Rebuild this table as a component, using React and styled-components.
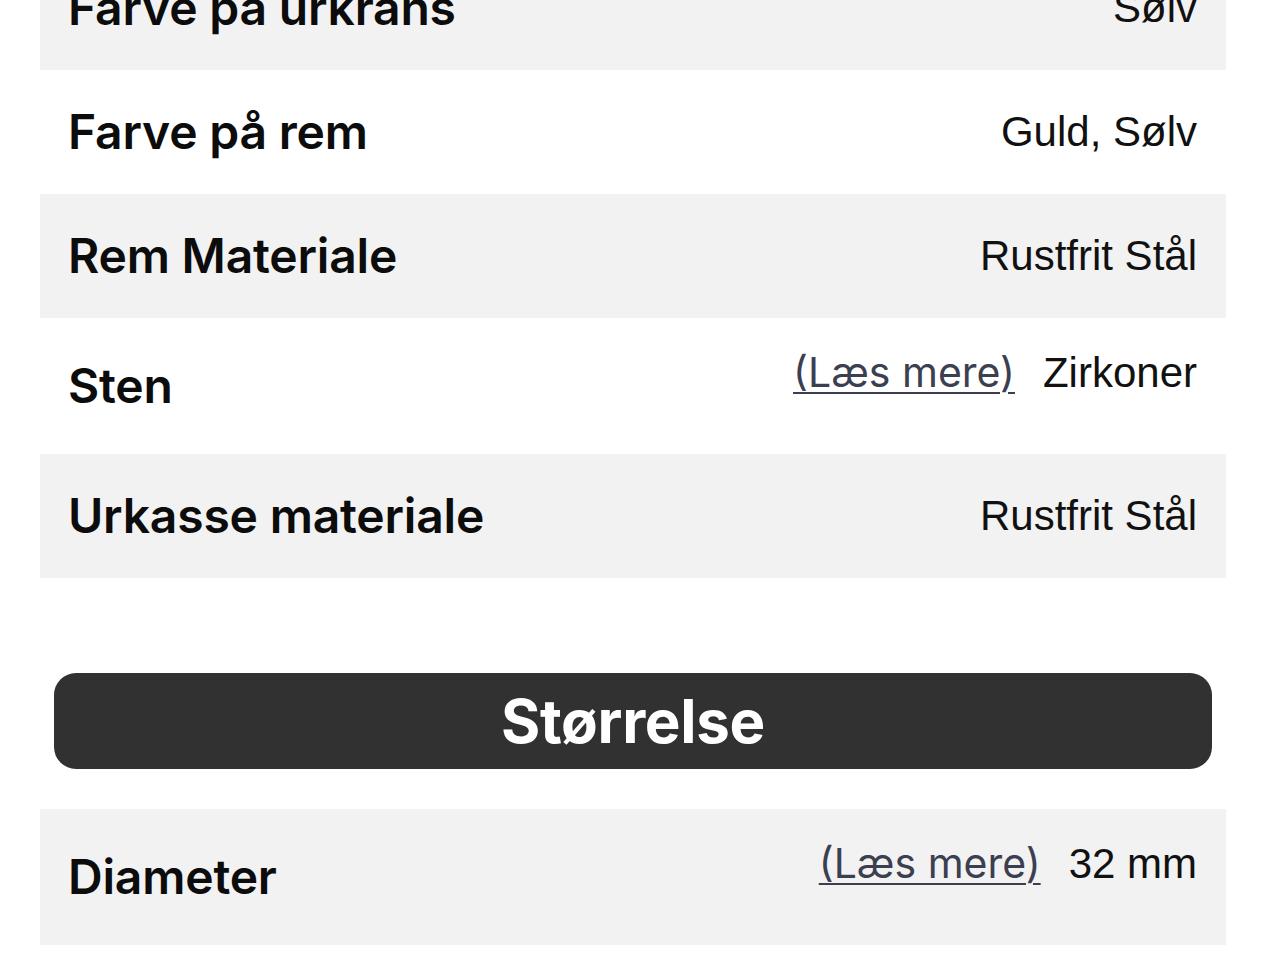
import React from 'react';
import styled, { createGlobalStyle } from 'styled-components';

const GlobalStyle = createGlobalStyle`
  html, body {
    margin: 0;
    padding: 0;
    background: #ffffff;
    overflow: hidden;
  }
`;

const Page = styled.div`
  width: 1186px;
  margin: -54px 0 0 40px;
`;

const Table = styled.div`
  display: flex;
  flex-direction: column;
`;

const Row = styled.div`
  display: flex;
  align-items: center;
  justify-content: space-between;
  box-sizing: border-box;
  height: ${p => (p.tall ? 136 : 124)}px;
  padding: 0 29px 0 28px;
  background: ${p => (p.shaded ? '#f2f2f2' : '#ffffff')};
`;

const Label = styled.div`
  font-family: Inter, "Noto Sans", sans-serif;
  font-weight: 600;
  font-size: 48px;
  line-height: 58px;
  color: #0c0c0c;
  letter-spacing: -0.2px;
`;

const Value = styled.div`
  display: flex;
  align-items: baseline;
  gap: 28px;
  margin-bottom: ${p => (p.raised ? 28 : 0)}px;
  font-family: "Liberation Sans", Arial, sans-serif;
  font-size: 42px;
  line-height: 50px;
  color: #111111;
`;

const ReadMore = styled.a`
  font-family: Inter, "Noto Sans", sans-serif;
  font-size: 41px;
  font-weight: 400;
  color: #3b3f50;
  text-decoration: underline;
  text-decoration-thickness: 2px;
  text-underline-offset: 5px;
  cursor: pointer;
`;

const SectionButton = styled.div`
  display: flex;
  align-items: center;
  justify-content: center;
  height: 96px;
  margin: 95px 14px 40px;
  border-radius: 22px;
  background: #313131;
  color: #ffffff;
  font-family: Inter, "Noto Sans", sans-serif;
  font-weight: 700;
  font-size: 60px;
  letter-spacing: -0.3px;
`;

const specs = [
  { label: 'Farve på urkrans', value: 'Sølv' },
  { label: 'Farve på rem', value: 'Guld, Sølv' },
  { label: 'Rem Materiale', value: 'Rustfrit Stål' },
  { label: 'Sten', value: 'Zirkoner', link: true },
  { label: 'Urkasse materiale', value: 'Rustfrit Stål' },
];

const sizes = [{ label: 'Diameter', value: '32 mm', link: true }];

const SpecRow = ({ item, shaded }) => (
  <Row shaded={shaded} tall={item.link}>
    <Label>{item.label}</Label>
    <Value raised={item.link}>
      {item.link && <ReadMore>(Læs mere)</ReadMore>}
      <span>{item.value}</span>
    </Value>
  </Row>
);

const App = () => (
  <>
    <GlobalStyle />
    <Page>
      <Table>
        {specs.map((s, i) => (
          <SpecRow key={s.label} item={s} shaded={i % 2 === 0} />
        ))}
      </Table>
      <SectionButton>Størrelse</SectionButton>
      <Table>
        {sizes.map(s => (
          <SpecRow key={s.label} item={s} shaded />
        ))}
      </Table>
    </Page>
  </>
);

export default App;
